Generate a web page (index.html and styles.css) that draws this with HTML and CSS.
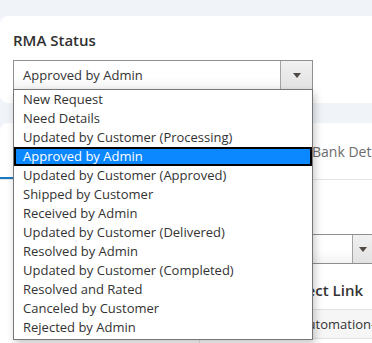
FILE: index.html
```html
<!DOCTYPE html>
<html>
<head>
    <link rel="stylesheet" href="styles.css">
</head>
<body>
    <div class="card status-card">
        <h2>RMA Status</h2>
        <div class="select">
            <span class="select-value">Approved by Admin</span>
            <span class="select-arrow"></span>

            <ul class="dropdown">
                <li>New Request</li>
                <li>Need Details</li>
                <li>Updated by Customer (Processing)</li>
                <li class="selected">Approved by Admin</li>
                <li>Updated by Customer (Approved)</li>
                <li>Shipped by Customer</li>
                <li>Received by Admin</li>
                <li>Updated by Customer (Delivered)</li>
                <li>Resolved by Admin</li>
                <li>Updated by Customer (Completed)</li>
                <li>Resolved and Rated</li>
                <li>Canceled by Customer</li>
                <li>Rejected by Admin</li>
            </ul>
        </div>
    </div>

    <div class="card details-card">
        <div class="tabs">
            <div class="tab active">Information</div>
            <div class="tab">Items</div>
            <div class="tab">Bank Details</div>
        </div>

        <div class="detail-grid">
            <div class="detail-left"></div>
            <div class="detail-right">
                <label class="field-label">Carrier</label>
                <div class="select small">
                    <span class="select-value"></span>
                    <span class="select-arrow"></span>
                </div>
                <h3>Redirect Link</h3>
                <div class="link-row">https://automation-store.example.com/rma</div>
            </div>
        </div>
    </div>
</body>
</html>
```

FILE: styles.css
```css
body {
    margin: 0;
    height: 343px;
    overflow: hidden;
    background: #f0f3f8;
    font-family: 'Open Sans', 'Noto Sans', sans-serif;
    color: #333;
}

.card {
    background: #fff;
    margin-right: -10px;
}

.status-card {
    margin-top: 16px;
    padding: 14px 13px 13px;
    border-radius: 8px 0 0 8px;
}

.status-card h2 {
    margin: 0 0 10px;
    font-size: 15px;
    line-height: 20px;
    font-weight: 600;
    color: #303030;
}

.select {
    position: relative;
    display: flex;
    width: 300px;
    height: 30px;
    box-sizing: border-box;
    border: 1px solid #8f8f8f;
    background: linear-gradient(#fff 55%, #f3f3f3);
    font-size: 13px;
}

.select-value {
    flex: 1;
    padding-left: 9px;
    line-height: 29px;
}

.select-arrow {
    position: relative;
    width: 31px;
    border-left: 1px solid #a3a3a3;
    background: linear-gradient(#f1f1f1, #e2e2e2);
}

.select-arrow::after {
    content: '';
    position: absolute;
    left: 12px;
    top: 12px;
    border-left: 4px solid transparent;
    border-right: 4px solid transparent;
    border-top: 5px solid #514943;
}

.dropdown {
    position: absolute;
    top: 28px;
    left: -1px;
    z-index: 10;
    width: 300px;
    box-sizing: border-box;
    margin: 0;
    padding: 0 0 2px;
    list-style: none;
    background: #fff;
    border: 1px solid #777;
    box-shadow: 2px 4px 8px rgba(0, 0, 0, 0.22);
}

.dropdown li {
    padding: 0 9px;
    line-height: 19px;
    white-space: nowrap;
}

.dropdown li.selected {
    background: #0b87ff;
    color: #fff;
    box-shadow: inset 0 0 0 2px #000;
}

.details-card {
    margin-top: 20px;
    height: 300px;
    border-radius: 8px 0 0 0;
}

.tabs {
    display: flex;
    height: 56px;
    border-bottom: 1px solid #e4e4e4;
}

.tab {
    display: flex;
    flex-shrink: 0;
    align-items: center;
    box-sizing: border-box;
    font-size: 14px;
    color: #6b6b6b;
    white-space: nowrap;
}

.tab.active {
    width: 150px;
    padding-left: 20px;
    box-shadow: inset 0 -2px #1979c3;
    color: #1979c3;
}

.tab:nth-child(2) {
    width: 162px;
    padding-left: 40px;
}

.detail-grid {
    display: grid;
    grid-template-columns: 200px 1fr;
}

.detail-left {
    border-right: 1px solid #e4e4e4;
    height: 200px;
}

.detail-right {
    padding: 24px 0 0 13px;
}

.field-label {
    display: block;
    margin-bottom: 10px;
    font-size: 13px;
    line-height: 20px;
}

.select.small {
    width: 172px;
}

.select.small .select-arrow::after {
    left: 6px;
}

.detail-right h3 {
    width: 150px;
    margin: 16px 0 9px;
    font-size: 15px;
    line-height: 20px;
    font-weight: 600;
    text-align: right;
    white-space: nowrap;
}

.link-row {
    border-top: 1px solid #e0e0e0;
    border-bottom: 1px solid #e0e0e0;
    background: #f6f6f6;
    padding: 1px 0 0 43px;
    font-size: 13px;
    line-height: 27px;
    white-space: nowrap;
}
```
